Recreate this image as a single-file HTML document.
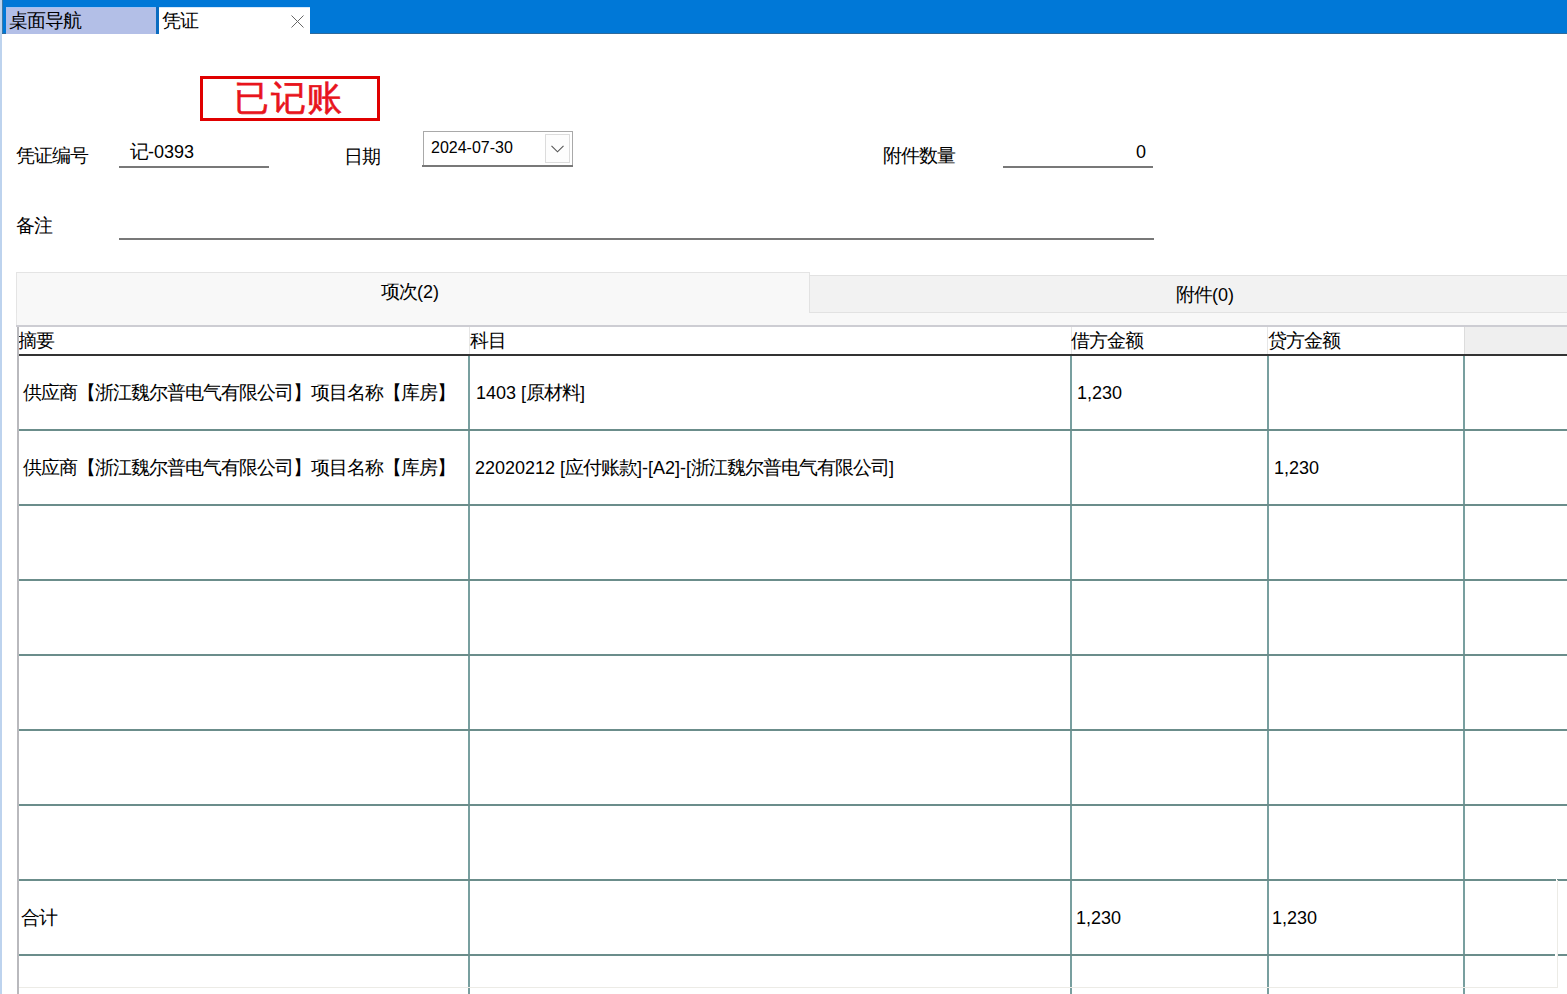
<!DOCTYPE html>
<html><head><meta charset="utf-8">
<style>
*{margin:0;padding:0;box-sizing:border-box}
html,body{width:1567px;height:994px;overflow:hidden;background:#fff}
body{font-family:"Liberation Sans",sans-serif;color:#000;position:relative;font-size:18px}
.a{position:absolute;white-space:nowrap}
.t{line-height:20px}
.c{font-size:19px;letter-spacing:-1px}
</style></head><body>
<div class="a" style="left:0px;top:0px;width:2px;height:994px;background:#bdd3ee;"></div>
<div class="a" style="left:2px;top:0px;width:1565px;height:34px;background:#0078d7;"></div>
<div class="a" style="left:2px;top:0px;width:1px;height:34px;background:#3f7aa5;"></div>
<div class="a" style="left:2px;top:33px;width:1565px;height:1px;background:#2f6a9c;"></div>
<div class="a" style="left:6px;top:7px;width:150px;height:27px;background:#b3bfe7;"></div>
<div class="a" style="left:6px;top:7px;width:150px;height:1px;background:#a2c2f2;"></div>
<div class="a" style="left:156px;top:7px;width:3px;height:27px;background:#0b6cc0;"></div>
<div class="a t" style="left:9px;top:11px;"><span class="c">桌面导航</span></div>
<div class="a" style="left:159px;top:7px;width:151px;height:27px;background:#fff;"></div>
<div class="a" style="left:159px;top:7px;width:151px;height:1px;background:#d6e8fa;"></div>
<div class="a t" style="left:162px;top:11px;"><span class="c">凭证</span></div>
<svg class="a" style="left:291px;top:15px" width="13" height="13" viewBox="0 0 13 13"><path d="M0.5 0.5L12.5 12.5M12.5 0.5L0.5 12.5" stroke="#666" stroke-width="1"/></svg>
<div class="a" style="left:200px;top:76px;width:180px;height:45px;background:transparent;border:3px solid #e00000"></div>
<div class="a" style="left:234px;top:80px;font-size:35px;line-height:35px;letter-spacing:1.5px;color:#e8141c;-webkit-text-stroke:0.6px #e8141c">已记账</div>
<div class="a t" style="left:16px;top:146px;"><span class="c">凭证编号</span></div>
<div class="a t" style="left:130px;top:142px;"><span class="c">记</span>-0393</div>
<div class="a" style="left:119px;top:166px;width:150px;height:2px;background:#787878;"></div>
<div class="a t" style="left:344px;top:147px;"><span class="c">日期</span></div>
<div class="a" style="left:423px;top:131px;width:150px;height:36px;background:#fff;border:1px solid #a9a9a9"></div>
<div class="a" style="left:422px;top:165px;width:151px;height:2px;background:#787878;"></div>
<div class="a t" style="left:431px;top:138px;font-size:16px">2024-07-30</div>
<div class="a" style="left:545px;top:134px;width:25px;height:29px;background:#fdfdfd;border:1px solid #dcdcdc"></div>
<svg class="a" style="left:551px;top:145px" width="13" height="8" viewBox="0 0 13 8"><path d="M0.5 0.8L6.5 6.8L12.5 0.8" fill="none" stroke="#555" stroke-width="1.1"/></svg>
<div class="a t" style="left:883px;top:146px;"><span class="c">附件数量</span></div>
<div class="a t" style="left:1136px;top:142px;">0</div>
<div class="a" style="left:1003px;top:166px;width:150px;height:2px;background:#787878;"></div>
<div class="a t" style="left:16px;top:216px;"><span class="c">备注</span></div>
<div class="a" style="left:119px;top:238px;width:1035px;height:2px;background:#787878;"></div>
<div class="a" style="left:16px;top:312px;width:1551px;height:14px;background:#f8f8f8;border-left:1px solid #e6e6e6"></div>
<div class="a" style="left:16px;top:272px;width:794px;height:41px;background:#f8f8f8;border:1px solid #e4e4e4;border-bottom:none"></div>
<div class="a" style="left:809px;top:275px;width:758px;height:38px;background:#f2f2f2;border:1px solid #e2e2e2;border-right:none"></div>
<div class="a t" style="left:381px;top:282px;"><span class="c">项次</span>(2)</div>
<div class="a t" style="left:1176px;top:285px;"><span class="c">附件</span>(0)</div>
<div class="a" style="left:16px;top:325px;width:1551px;height:2px;background:#cdcdd3;"></div>
<div class="a" style="left:1464px;top:327px;width:103px;height:27px;background:#efefef;border-left:1px solid #dcdcdc"></div>
<div class="a" style="left:469px;top:327px;width:1px;height:27px;background:#e6e6e6;"></div>
<div class="a" style="left:1071px;top:327px;width:1px;height:27px;background:#e6e6e6;"></div>
<div class="a" style="left:1267px;top:327px;width:1px;height:27px;background:#e6e6e6;"></div>
<div class="a t" style="left:18px;top:331px;"><span class="c">摘要</span></div>
<div class="a t" style="left:470px;top:331px;"><span class="c">科目</span></div>
<div class="a t" style="left:1071px;top:331px;"><span class="c">借方金额</span></div>
<div class="a t" style="left:1268px;top:331px;"><span class="c">贷方金额</span></div>
<div class="a" style="left:17px;top:354px;width:1550px;height:2px;background:#333333;"></div>
<div class="a" style="left:468px;top:356px;width:2px;height:631px;background:#789f9f;"></div>
<div class="a" style="left:468px;top:988px;width:2px;height:6px;background:#789f9f;"></div>
<div class="a" style="left:1070px;top:356px;width:2px;height:631px;background:#789f9f;"></div>
<div class="a" style="left:1070px;top:988px;width:2px;height:6px;background:#789f9f;"></div>
<div class="a" style="left:1267px;top:356px;width:2px;height:631px;background:#789f9f;"></div>
<div class="a" style="left:1267px;top:988px;width:2px;height:6px;background:#789f9f;"></div>
<div class="a" style="left:1463px;top:356px;width:2px;height:631px;background:#789f9f;"></div>
<div class="a" style="left:1463px;top:988px;width:2px;height:6px;background:#789f9f;"></div>
<div class="a" style="left:19px;top:429px;width:1548px;height:2px;background:#6b8d8b;"></div>
<div class="a" style="left:19px;top:504px;width:1548px;height:2px;background:#6b8d8b;"></div>
<div class="a" style="left:19px;top:579px;width:1548px;height:2px;background:#6b8d8b;"></div>
<div class="a" style="left:19px;top:654px;width:1548px;height:2px;background:#6b8d8b;"></div>
<div class="a" style="left:19px;top:729px;width:1548px;height:2px;background:#6b8d8b;"></div>
<div class="a" style="left:19px;top:804px;width:1548px;height:2px;background:#6b8d8b;"></div>
<div class="a" style="left:19px;top:879px;width:1548px;height:2px;background:#6b8d8b;"></div>
<div class="a" style="left:19px;top:954px;width:1548px;height:2px;background:#6b8d8b;"></div>
<div class="a" style="left:18px;top:987px;width:1540px;height:1px;background:#ecebe6;"></div>
<div class="a" style="left:1557px;top:880px;width:1px;height:108px;background:#ecebe6;"></div>
<div class="a" style="left:1555px;top:954px;width:2px;height:2px;background:#fff;"></div>
<div class="a" style="left:1556px;top:879px;width:1px;height:2px;background:#fff;"></div>
<div class="a" style="left:17px;top:327px;width:2px;height:667px;background:#b9b9bd;"></div>
<div class="a t" style="left:23px;top:383px;"><span class="c">供应商【浙江魏尔普电气有限公司】项目名称【库房】</span></div>
<div class="a t" style="left:476px;top:383px;">1403 [<span class="c">原材料</span>]</div>
<div class="a t" style="left:1077px;top:383px;">1,230</div>
<div class="a t" style="left:23px;top:458px;"><span class="c">供应商【浙江魏尔普电气有限公司】项目名称【库房】</span></div>
<div class="a t" style="left:475px;top:458px;">22020212 [<span class="c">应付账款</span>]-[A2]-[<span class="c">浙江魏尔普电气有限公司</span>]</div>
<div class="a t" style="left:1274px;top:458px;">1,230</div>
<div class="a t" style="left:21px;top:908px;"><span class="c">合计</span></div>
<div class="a t" style="left:1076px;top:908px;">1,230</div>
<div class="a t" style="left:1272px;top:908px;">1,230</div>
</body></html>
